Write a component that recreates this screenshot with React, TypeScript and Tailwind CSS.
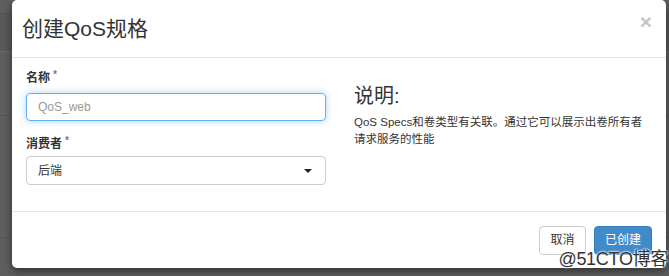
const FONT = '"Liberation Sans", "Noto Sans CJK SC", sans-serif';

const Label = (props: { children: string }) => (
  <div className="flex items-start gap-[3px] text-[12px] font-bold leading-[16px] text-[#333]">
    {props.children}
    <span className="text-[10px] leading-[10px] text-[#428bca]">*</span>
  </div>
);

export default function App() {
  return (
    <div
      className="relative h-[276px] w-[669px] overflow-hidden bg-[#5e5e5e]"
      style={{ fontFamily: FONT }}>
      {/* page behind the backdrop */}
      <div className="flex flex-col">
        <div className="h-[14px] border-b border-[#555]" />
        <div className="h-[38px] border-b border-[#686868] bg-[#595959]" />
        <div className="h-[64px] border-b border-[#555]" />
        <div className="h-[122px] border-b border-[#555]" />
      </div>

      {/* modal */}
      <div className="absolute left-[12px] top-0 flex h-[268px] w-[654px] flex-col rounded-[5px] bg-white shadow-[0_3px_9px_rgba(0,0,0,0.5)]">
        <div className="flex h-[58px] items-center justify-between border-b border-[#e5e5e5] pl-[10px] pr-[14px]">
          <h4 className="text-[21px] leading-[26px] text-[#333]">创建QoS规格</h4>
          <span className="-mt-[14px] text-[21px] font-bold leading-none text-[#c4c4c4]">×</span>
        </div>

        <div className="flex flex-1 gap-[28px] border-b border-[#e5e5e5] px-[14px] pt-[12px]">
          <div className="flex w-[300px] flex-col">
            <Label>名称</Label>
            <input
              className="mt-[7px] h-[28px] rounded-[4px] border border-[#66afe9] px-[11px] text-[12px] text-[#555] shadow-[0_0_7px_rgba(102,175,233,0.55)] outline-none placeholder:text-[#999]"
              placeholder="QoS_web"
              style={{ fontFamily: FONT }} />
            <div className="mt-[15px]">
              <Label>消费者</Label>
            </div>
            <div className="mt-[4px] flex h-[29px] items-center justify-between rounded-[4px] border border-[#ccc] pl-[11px] pr-[13px] text-[12px] text-[#333]">
              <span>后端</span>
              <svg width="8" height="4" viewBox="0 0 8 4">
                <path d="M0 0h8L4 4z" fill="#222" />
              </svg>
            </div>
          </div>

          <div className="flex w-[298px] flex-col pt-[13px]">
            <h3 className="text-[20px] leading-[26px] text-[#333]">说明:</h3>
            <p className="mt-[5px] text-[11.5px] leading-[17px] text-[#333]">
              QoS Specs和卷类型有关联。通过它可以展示出卷所有者请求服务的性能
            </p>
          </div>
        </div>

        <div className="flex h-[56px] items-center justify-end gap-[8px] px-[14px]">
          <button className="h-[29px] w-[47px] rounded-[4px] border border-[#ccc] bg-white text-[12px] text-[#333]">
            取消
          </button>
          <button className="h-[29px] w-[58px] rounded-[4px] border border-[#357ebd] bg-[#428bca] text-[12px] text-white">
            已创建
          </button>
        </div>
      </div>

      <span className="absolute bottom-[7px] right-[1px] text-[18px] leading-[20px] tracking-[-0.3px] text-[#333] [text-shadow:0_0_2px_#fff,0_0_2px_#fff,0_0_2px_#fff]">
        @51CTO博客
      </span>
    </div>
  );
}
